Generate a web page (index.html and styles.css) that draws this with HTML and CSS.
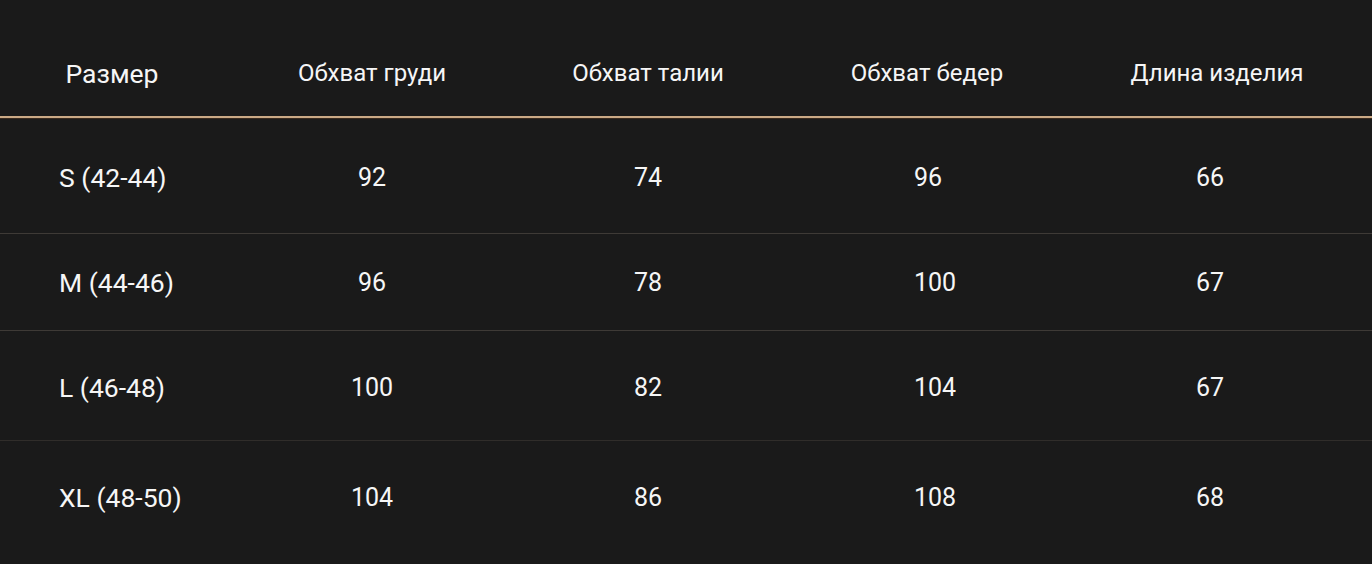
FILE: index.html
```html
<!DOCTYPE html>
<html lang="ru">
<head>
<meta charset="utf-8">
<title>Таблица размеров</title>
<link rel="stylesheet" href="styles.css">
</head>
<body>
<div class="table">
  <div class="row head">
    <div class="cell c1">Размер</div>
    <div class="cell c2">Обхват груди</div>
    <div class="cell c3">Обхват талии</div>
    <div class="cell c4">Обхват бедер</div>
    <div class="cell c5">Длина изделия</div>
  </div>
  <div class="row r1">
    <div class="cell c1">S (42-44)</div>
    <div class="cell c2">92</div>
    <div class="cell c3">74</div>
    <div class="cell c4">96</div>
    <div class="cell c5">66</div>
  </div>
  <div class="row r2">
    <div class="cell c1">M (44-46)</div>
    <div class="cell c2">96</div>
    <div class="cell c3">78</div>
    <div class="cell c4">100</div>
    <div class="cell c5">67</div>
  </div>
  <div class="row r3">
    <div class="cell c1">L (46-48)</div>
    <div class="cell c2">100</div>
    <div class="cell c3">82</div>
    <div class="cell c4">104</div>
    <div class="cell c5">67</div>
  </div>
  <div class="row r4">
    <div class="cell c1">XL (48-50)</div>
    <div class="cell c2">104</div>
    <div class="cell c3">86</div>
    <div class="cell c4">108</div>
    <div class="cell c5">68</div>
  </div>
</div>
</body>
</html>
```
FILE: styles.css
```css
html, body {
  margin: 0;
  padding: 0;
  background: #1a1a1a;
}
body {
  width: 1372px;
  height: 564px;
  overflow: hidden;
  font-family: Roboto, "Noto Sans", sans-serif;
  color: #f6f6f6;
}
.table {
  display: flex;
  flex-direction: column;
}
.row {
  display: grid;
  grid-template-columns: 224px 296px 256px 308px 252px;
  align-items: center;
  font-size: 25px;
  box-sizing: border-box;
}
.row.head {
  height: 118px;
  padding-top: 30px;
  font-size: 24px;
  border-bottom: 2px solid #caa985;
  box-shadow: 0 1px 0 #3a2a1e;
}
.r1 { height: 116px; padding-top: 4px; border-bottom: 1px solid #3e3a36; }
.r2 { height: 97px; border-bottom: 1px solid #3e3a36; }
.r3 { height: 110px; padding-top: 3px; border-bottom: 1px solid #302d2a; }
.r4 { height: 123px; padding-bottom: 10px; }
.cell {
  text-align: center;
  white-space: nowrap;
}
.row .c1 {
  text-align: left;
  padding-left: 59px;
  font-size: 26.5px;
}
.row.head .c1 {
  text-align: center;
  padding-left: 0;
  font-size: 26.5px;
}
.row .c4 {
  text-align: left;
  padding-left: 138px;
}
.row.head .c4 {
  text-align: center;
  padding-left: 0;
  padding-right: 6px;
}
.row .c5 {
  text-align: left;
  padding-left: 112px;
}
.row.head .c5 {
  text-align: center;
  padding-left: 14px;
}
```
